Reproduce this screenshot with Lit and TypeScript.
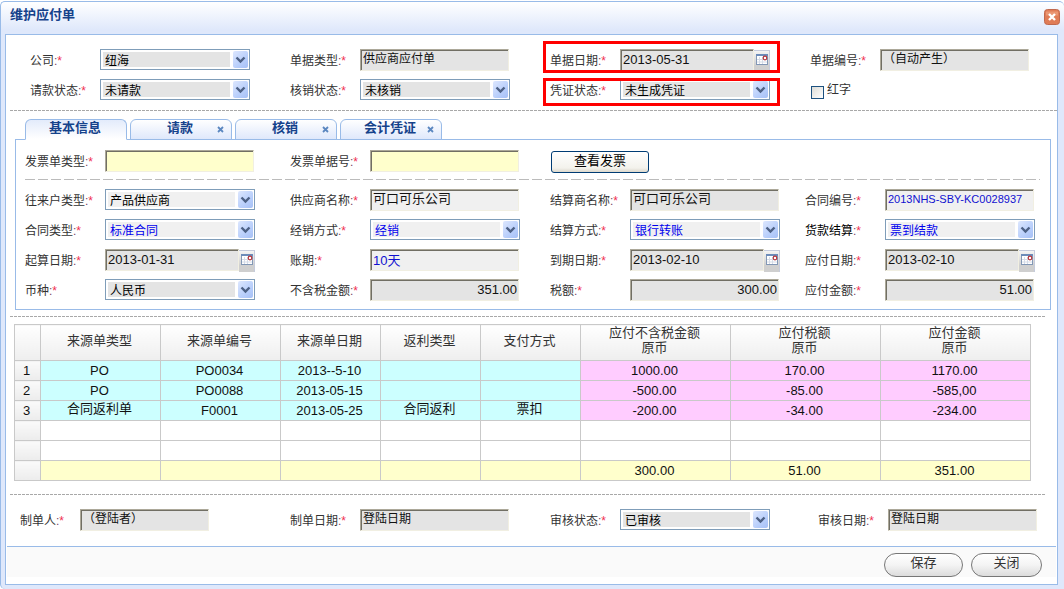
import { LitElement, html, css, svg, nothing } from "lit";
import { customElement, state } from "lit/decorators.js";
import { classMap } from "lit/directives/class-map.js";

type Kind = "text" | "select" | "date" | "check" | "button";

interface Field {
  id: string;
  label: string;
  kind: Kind;
  value?: string;
  tone?: "grey" | "light" | "yellow";
  blue?: boolean;
  raised?: boolean;
  large?: boolean;
  small?: boolean;
  right?: boolean;
  dark?: boolean;
  marked?: boolean;
}

const HEADER_FIELDS: Field[] = [
  { id: "company", label: "公司", kind: "select", value: "纽海" },
  { id: "docType", label: "单据类型", kind: "text", value: "供应商应付单", raised: true },
  { id: "docDate", label: "单据日期", kind: "date", value: "2013-05-31", marked: true },
  { id: "docNo", label: "单据编号", kind: "text", value: "（自动产生）", raised: true },
  { id: "payState", label: "请款状态", kind: "select", value: "未请款" },
  { id: "writeOff", label: "核销状态", kind: "select", value: "未核销" },
  { id: "voucher", label: "凭证状态", kind: "select", value: "未生成凭证", marked: true },
  { id: "redInk", label: "红字", kind: "check" },
];

const INVOICE_FIELDS: Field[] = [
  { id: "invType", label: "发票单类型", kind: "text", value: "", tone: "yellow" },
  { id: "invNo", label: "发票单据号", kind: "text", value: "", tone: "yellow" },
  { id: "viewInv", label: "查看发票", kind: "button" },
];

const DETAIL_FIELDS: Field[] = [
  { id: "partyType", label: "往来户类型", kind: "select", value: "产品供应商", tone: "light" },
  { id: "supplier", label: "供应商名称", kind: "text", value: "可口可乐公司", tone: "light", raised: true, large: true },
  { id: "settler", label: "结算商名称", kind: "text", value: "可口可乐公司", raised: true, large: true },
  { id: "contractNo", label: "合同编号", kind: "text", value: "2013NHS-SBY-KC0028937", tone: "light", blue: true, small: true },
  { id: "contractType", label: "合同类型", kind: "select", value: "标准合同", tone: "light", blue: true },
  { id: "saleMode", label: "经销方式", kind: "select", value: "经销", tone: "light", blue: true },
  { id: "settleMode", label: "结算方式", kind: "select", value: "银行转账", tone: "light", blue: true },
  { id: "goodsSettle", label: "货款结算", kind: "select", value: "票到结款", tone: "light", blue: true, dark: true },
  { id: "startDate", label: "起算日期", kind: "date", value: "2013-01-31" },
  { id: "term", label: "账期", kind: "text", value: "10天", tone: "light", blue: true },
  { id: "dueDate", label: "到期日期", kind: "date", value: "2013-02-10" },
  { id: "payDate", label: "应付日期", kind: "date", value: "2013-02-10" },
  { id: "currency", label: "币种", kind: "select", value: "人民币" },
  { id: "net", label: "不含税金额", kind: "text", value: "351.00", right: true },
  { id: "tax", label: "税额", kind: "text", value: "300.00", right: true },
  { id: "total", label: "应付金额", kind: "text", value: "51.00", right: true },
];

const AUDIT_FIELDS: Field[] = [
  { id: "maker", label: "制单人", kind: "text", value: "（登陆者）", raised: true },
  { id: "makeDate", label: "制单日期", kind: "text", value: "登陆日期", raised: true },
  { id: "auditState", label: "审核状态", kind: "select", value: "已审核" },
  { id: "auditDate", label: "审核日期", kind: "text", value: "登陆日期", raised: true },
];

@customElement("form-field")
export class FormField extends LitElement {
  static properties = { field: { attribute: false } };
  declare field: Field;

  static styles = css`
    :host {
      display: flex;
      align-items: flex-start;
      position: relative;
      min-width: 0;
      color: #333;
      font: 12px/22px "Liberation Sans", "Noto Sans CJK SC", sans-serif;
    }
    label.name {
      flex: none;
      width: var(--label-width, 70px);
      line-height: 24px;
      white-space: nowrap;
    }
    .name.dark {
      color: #000;
    }
    .colon {
      color: #746;
    }
    .star {
      color: #f03050;
    }
    .box {
      width: var(--control-width, 150px);
      display: grid;
      grid-template-columns: minmax(0, 1fr);
    }
    .box.dated {
      grid-template-columns: minmax(0, 1fr) 16px;
    }
    input,
    select,
    button {
      box-sizing: border-box;
      margin: 0;
      font: inherit;
      color: #000;
      outline: none;
    }
    .text {
      width: 100%;
      height: 22px;
      padding: 0 1px 2px 2px;
      border: 1px solid;
      border-color: #aca899 #f1efe2 #f1efe2 #aca899;
      border-radius: 0;
      box-shadow: inset 1px 1px #716f64;
      background: #e4e4e4;
      color: #111;
      font-size: 13px;
      line-height: 18px;
    }
    .text.raised {
      padding-bottom: 5px;
      font-size: 12px;
      line-height: 15px;
    }
    .text.large {
      font-size: 13px;
    }
    .text.small {
      font-size: 11px;
    }
    .text.right {
      text-align: right;
    }
    .light {
      --tone: #f0f0f0;
    }
    .text.light {
      background: #f0f0f0;
    }
    .text.yellow {
      background: #ffffcc;
    }
    .single {
      padding-right: 1px;
      box-sizing: border-box;
    }
    .drop > * {
      grid-area: 1 / 1;
    }
    select {
      appearance: none;
      width: 100%;
      height: 21px;
      padding: 0 22px 0 4px;
      border: 1px solid #7f9db9;
      border-radius: 0;
      background: linear-gradient(var(--tone, #e4e4e4), var(--tone, #e4e4e4)) 2px 2px /
        calc(100% - 21px) calc(100% - 4px) no-repeat #fff;
    }
    .blue {
      color: #0000ee;
    }
    .text.blue {
      color: #1010d0;
    }
    .arrow {
      justify-self: end;
      width: 15px;
      height: 17px;
      margin: 2px;
      border-radius: 2px;
      background: linear-gradient(135deg, #dde7fe, #b9cffb 60%, #a6c0f6);
      pointer-events: none;
    }
    .pick {
      height: 22px;
      margin-top: 1px;
      padding: 2px 0 0;
      display: grid;
      justify-items: center;
      align-items: start;
      border: solid #c5cbdc;
      border-width: 1px 1px 0 0;
      background: linear-gradient(#f4f4f4, #cfcfcf 70%);
    }
    .tick {
      display: flex;
      gap: 3px;
      padding-left: 1px;
      line-height: 22px;
    }
    .tick input {
      appearance: none;
      width: 13px;
      height: 13px;
      margin-top: 7px;
      border: 1px solid #1c5180;
      background: linear-gradient(135deg, #dcdcd7, #fff);
    }
    .tick input:checked {
      background: #1c5180;
    }
    .push {
      width: 98px;
      height: 22px;
      margin: 1px 0 0 1px;
      padding: 0 0 2px;
      border: 1px solid #003c74;
      border-radius: 3px;
      background: linear-gradient(#fff, #f3f2ec 80%, #dcd8cc);
      font-size: 13px;
      line-height: 18px;
    }
    :host([marked])::after {
      content: "";
      position: absolute;
      inset: var(--mark-inset);
      width: 237px;
      box-sizing: border-box;
      border: 3px solid #f00;
      pointer-events: none;
    }
  `;

  private control(f: Field) {
    const tone = { light: f.tone === "light", yellow: f.tone === "yellow", blue: !!f.blue };
    if (f.kind === "select") {
      return html`<div class="box drop">
        <select id=${f.id} class=${classMap(tone)}>
          <option>${f.value}</option>
        </select>
        <svg class="arrow" viewBox="0 0 15 17" aria-hidden="true">
          <path d="M3.5 6.5l4 4 4-4" fill="none" stroke="#4d6185" stroke-width="2.4" />
        </svg>
      </div>`;
    }
    const input = html`<input
      id=${f.id}
      type="text"
      class=${classMap({
        text: true,
        ...tone,
        raised: !!f.raised,
        large: !!f.large,
        small: !!f.small,
        right: !!f.right,
      })}
      .value=${f.value ?? ""}
    />`;
    if (f.kind === "date") {
      return html`<div class="box dated">
        ${input}
        <button class="pick" type="button" aria-label="选择日期">
          <svg width="12" height="12" viewBox="0 0 12 12" aria-hidden="true">
            <rect x=".5" y="1.5" width="11" height="10" fill="#fff" stroke="#8297b5" />
            <path d="M0 2h12" stroke="#6c8cba" stroke-width="2" />
            <path d="M3.5 4v7M6.5 4v7M1 6.5h7M1 9h10" stroke="#d5dce8" stroke-width="1" />
            <circle cx="9" cy="5" r="1.8" fill="#fff" stroke="#b5343c" stroke-width="1.2" />
          </svg>
        </button>
      </div>`;
    }
    return html`<div class="box single">${input}</div>`;
  }

  render() {
    const f = this.field;
    if (f.kind === "check") {
      return html`<label class="tick"><input type="checkbox" />${f.label}</label>`;
    }
    if (f.kind === "button") {
      return html`<button class="push" type="button">${f.label}</button>`;
    }
    return html`<label class=${classMap({ name: true, dark: !!f.dark })} for=${f.id}
        >${f.label}<span class="colon">:</span><span class="star">*</span></label
      >${this.control(f)}`;
  }
}

const COLUMNS = [
  { title: ["来源单类型"], width: 120 },
  { title: ["来源单编号"], width: 120 },
  { title: ["来源单日期"], width: 100 },
  { title: ["返利类型"], width: 100 },
  { title: ["支付方式"], width: 100 },
  { title: ["应付不含税金额", "原币"], width: 150 },
  { title: ["应付税额", "原币"], width: 150 },
  { title: ["应付金额", "原币"], width: 150 },
];

const ROWS = [
  ["PO", "PO0034", "2013--5-10", "", "", "1000.00", "170.00", "1170.00"],
  ["PO", "PO0088", "2013-05-15", "", "", "-500.00", "-85.00", "-585,00"],
  ["合同返利单", "F0001", "2013-05-25", "合同返利", "票扣", "-200.00", "-34.00", "-234.00"],
  [],
  [],
];

const TOTALS = ["", "", "", "", "", "300.00", "51.00", "351.00"];

@customElement("source-table")
export class SourceTable extends LitElement {
  static styles = css`
    :host {
      display: block;
      color: #111;
      font: 13px/15px "Liberation Sans", "Noto Sans CJK SC", sans-serif;
    }
    table {
      width: 100%;
      table-layout: fixed;
      border-collapse: collapse;
    }
    .index {
      width: 26px;
    }
    th,
    td {
      height: 19px;
      padding: 0 2px 0 0;
      border: 1px solid #c9c9c9;
      text-align: center;
      font-weight: normal;
    }
    thead th {
      height: 36px;
      padding-bottom: 5px;
      box-sizing: border-box;
      background: linear-gradient(#fff, #eee);
      color: #333;
    }
    tbody th,
    tfoot th {
      background: linear-gradient(#fafafa, #ececec);
    }
    .source {
      background: #ccffff;
    }
    .money {
      background: #ffccff;
    }
    tfoot td {
      background: #ffffcc;
    }
    .han {
      vertical-align: top;
    }
  `;

  render() {
    return html`<table>
      <colgroup>
        <col class="index" />
        ${COLUMNS.map((c) => html`<col style="width:${c.width}px" />`)}
      </colgroup>
      <thead>
        <tr>
          <th></th>
          ${COLUMNS.map((c) => html`<th scope="col">${c.title[0]}${c.title[1] ? html`<br />${c.title[1]}` : nothing}</th>`)}
        </tr>
      </thead>
      <tbody>
        ${ROWS.map(
          (row, i) => html`<tr>
            <th>${row.length ? i + 1 : ""}</th>
            ${COLUMNS.map(
              (_, c) => html`<td
                class=${classMap({
                  source: row.length > 0 && c < 5,
                  money: row.length > 0 && c >= 5,
                  han: /[\u4e00-\u9fff]/.test(row[c] ?? ""),
                })}
              >${row[c] ?? ""}</td>`
            )}
          </tr>`
        )}
      </tbody>
      <tfoot>
        <tr>
          <th></th>
          ${TOTALS.map((t) => html`<td>${t}</td>`)}
        </tr>
      </tfoot>
    </table>`;
  }
}

const cross = svg`<path d="M1 1l5 5M6 1l-5 5" fill="none" stroke="#5b87c0" stroke-width="1.8" />`;

@customElement("app-root")
export class AppRoot extends LitElement {
  @state() private active = 0;

  static styles = css`
    :host {
      display: block;
      background: #fff;
      padding-top: 1px;
      color: #333;
      font: 12px/22px "Liberation Sans", "Noto Sans CJK SC", sans-serif;
    }
    .window {
      padding: 0 6px 4px 4px;
      border: solid #99bbe8;
      border-width: 1px 0 0 1px;
      border-radius: 5px 5px 0 5px;
      background: linear-gradient(#fff, #dfe8fb 28px);
    }
    .title {
      display: flex;
      justify-content: space-between;
      align-items: flex-start;
      height: 32px;
      padding-left: 5px;
      box-sizing: border-box;
    }
    h1 {
      margin: 0;
      padding-top: 2px;
      color: #15428b;
      font-size: 13px;
      line-height: 22px;
    }
    button {
      font: inherit;
      margin: 0;
      padding: 0;
      border: 0;
      background: none;
    }
    .shut {
      display: flex;
      margin: 7px -2px 0 0;
    }
    .panel {
      border: 1px solid #99bbe8;
      background: #fff;
      padding-bottom: 7px;
    }
    .grid {
      display: grid;
      grid-auto-rows: 22px;
      row-gap: 8px;
    }
    .head {
      grid-template-columns: 260fr 260fr 260fr 247fr;
      padding: 14px 0 9px 24px;
    }
    .head form-field {
      --mark-inset: -8px auto -2px -7px;
    }
    .head form-field:nth-child(n + 5) {
      --mark-inset: -1px auto -5px -7px;
    }
    .rule {
      height: 1px;
      margin: 0 12px 0 4px;
      background: repeating-linear-gradient(90deg, #a8a8a8 0 3px, transparent 3px 4px);
    }
    .rule.wide {
      margin-right: 0;
    }
    .tabs {
      display: flex;
      gap: 3px;
      padding: 8px 0 0 19px;
    }
    .tab {
      position: relative;
      display: flex;
      width: 102px;
      height: 21px;
      margin-bottom: -1px;
      box-sizing: border-box;
      border: 1px solid #99bbe8;
      border-radius: 6px 6px 0 0;
      background: linear-gradient(#fff, #dfe8fb);
    }
    .tab.active {
      border-bottom-color: #fff;
      background: linear-gradient(#e3ebfb, #fff);
      z-index: 1;
    }
    .tab .text {
      flex: 1;
      height: 16px;
      padding-right: 2px;
      line-height: 14px;
      color: #15428b;
      font-size: 13px;
      font-weight: bold;
    }
    .tab .drop {
      position: absolute;
      right: 7px;
      top: 6px;
      display: flex;
    }
    .sheet {
      margin: 0 6px 6px 9px;
      padding: 10px 0 8px 9px;
      border: 1px solid #99bbe8;
    }
    .sheet .grid {
      --label-width: 80px;
      grid-template-columns: 265fr 260fr 255fr 245fr;
    }
    .dashes {
      height: 1px;
      margin: 7px 10px 9px 0;
      background: repeating-linear-gradient(90deg, #bbb 0 10px, transparent 10px 13px);
    }
    source-table {
      margin: 7px 26px 13px 8px;
    }
    .audit {
      grid-template-columns: 270fr 260fr 268fr 239fr;
      padding: 14px 0 15px 14px;
    }
    .audit form-field:first-child {
      --label-width: 60px;
      --control-width: 130px;
    }
    .actions {
      display: flex;
      justify-content: flex-end;
      gap: 8px;
      height: 31px;
      margin: 0 1px;
      padding: 6px 14px 0;
      box-sizing: border-box;
      border-top: 1px solid #99bbe8;
      background: #fafafa;
    }
    .actions button {
      box-sizing: border-box;
      min-width: 71px;
      height: 24px;
      padding: 0 0 4px;
      border: 1px solid #777;
      border-radius: 12px;
      background: linear-gradient(#fff, #f4f4f4 50%, #dcdcdc);
      color: #333;
      font-size: 13px;
      line-height: 18px;
    }
    .actions .save {
      min-width: 79px;
    }
  `;

  private fields(list: Field[]) {
    return list.map((f) => html`<form-field .field=${f} ?marked=${!!f.marked}></form-field>`);
  }

  render() {
    const tabs = ["基本信息", "请款", "核销", "会计凭证"];
    return html`<div class="window">
      <header class="title">
        <h1>维护应付单</h1>
        <button class="shut" type="button" aria-label="关闭窗口">
          <svg width="16" height="16" viewBox="0 0 16 16" aria-hidden="true">
            <rect x=".5" y=".5" width="15" height="15" rx="3" fill="#e07c56" stroke="#c0694e" />
            <path d="M2 2.5h12v4H2z" fill="#ea9672" />
            <path d="M5 5l6 6M11 5l-6 6" stroke="#fff" stroke-width="2.4" />
          </svg>
        </button>
      </header>
      <main class="panel">
        <div class="grid head">${this.fields(HEADER_FIELDS)}</div>
        <div class="rule wide"></div>
        <div class="tabs">
          ${tabs.map(
            (t, i) => html`<div class=${classMap({ tab: true, active: i === this.active })}>
              <button class="text" type="button" @click=${() => (this.active = i)}>${t}</button>
              ${i
                ? html`<button class="drop" type="button" aria-label="关闭${t}">
                    <svg width="7" height="7" viewBox="0 0 7 7" aria-hidden="true">${cross}</svg>
                  </button>`
                : nothing}
            </div>`
          )}
        </div>
        <section class="sheet">
          <div class="grid">${this.fields(INVOICE_FIELDS)}</div>
          <div class="dashes"></div>
          <div class="grid">${this.fields(DETAIL_FIELDS)}</div>
        </section>
        <div class="rule"></div>
        <source-table></source-table>
        <div class="rule"></div>
        <div class="grid audit">${this.fields(AUDIT_FIELDS)}</div>
        <footer class="actions">
          <button class="save" type="button">保存</button>
          <button type="button">关闭</button>
        </footer>
      </main>
    </div>`;
  }
}
